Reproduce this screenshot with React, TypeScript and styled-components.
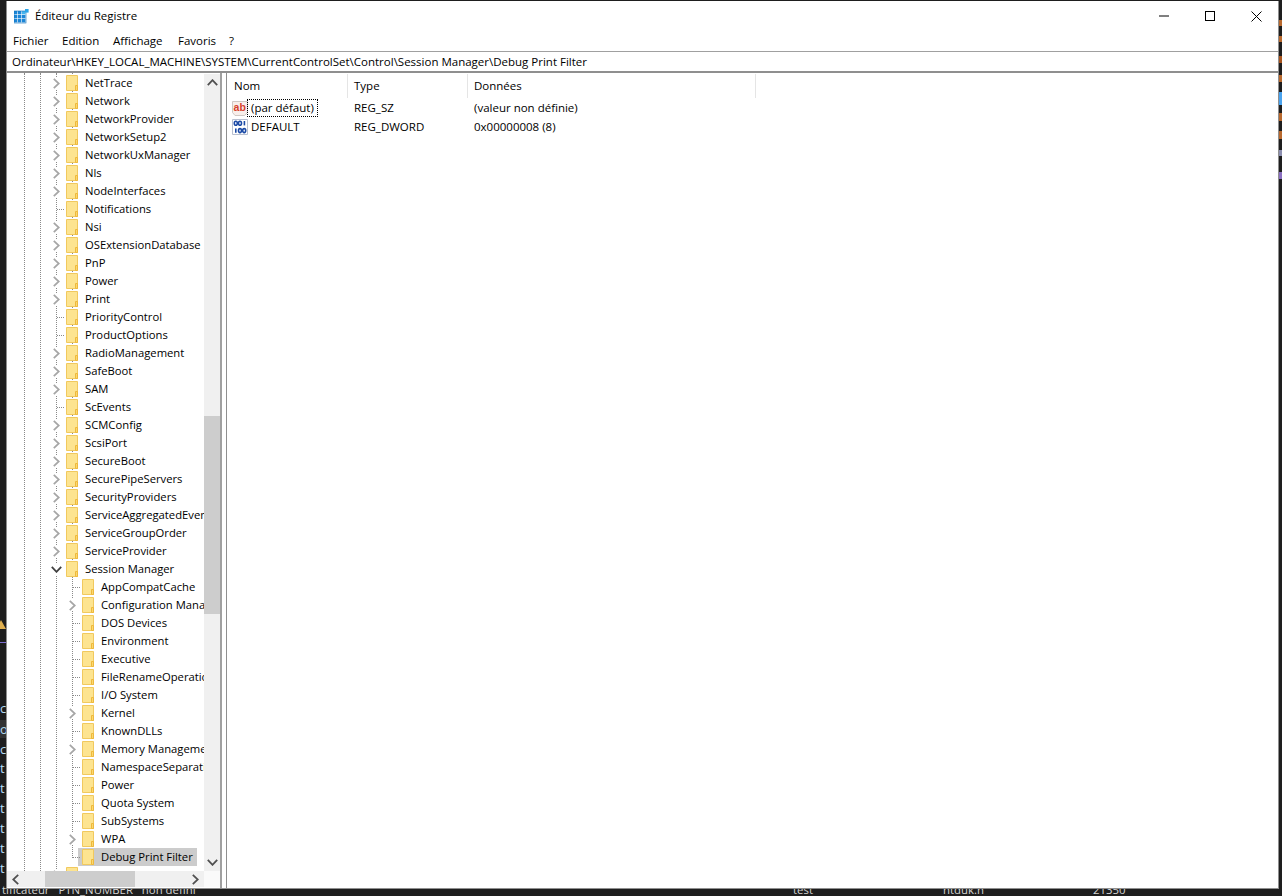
import React from 'react'
import styled, { createGlobalStyle } from 'styled-components'

const UI_FONT = '"Open Sans", "Noto Sans", sans-serif'

const GlobalStyle = createGlobalStyle`
  html, body {
    margin: 0;
    padding: 0;
    background: #1e1e1e;
  }
`

type TreeItem = { name: string; level: 1 | 2; kind: 'closed' | 'open' | 'leaf'; selected?: boolean }

const closed = (name: string, level: 1 | 2 = 1): TreeItem => ({ name, level, kind: 'closed' })
const leaf = (name: string, level: 1 | 2 = 1): TreeItem => ({ name, level, kind: 'leaf' })

const treeItems: TreeItem[] = [
  closed('NetTrace'),
  closed('Network'),
  closed('NetworkProvider'),
  closed('NetworkSetup2'),
  closed('NetworkUxManager'),
  closed('Nls'),
  closed('NodeInterfaces'),
  leaf('Notifications'),
  closed('Nsi'),
  closed('OSExtensionDatabase'),
  closed('PnP'),
  closed('Power'),
  closed('Print'),
  leaf('PriorityControl'),
  leaf('ProductOptions'),
  closed('RadioManagement'),
  closed('SafeBoot'),
  closed('SAM'),
  leaf('ScEvents'),
  closed('SCMConfig'),
  closed('ScsiPort'),
  closed('SecureBoot'),
  closed('SecurePipeServers'),
  closed('SecurityProviders'),
  closed('ServiceAggregatedEvents'),
  closed('ServiceGroupOrder'),
  closed('ServiceProvider'),
  { name: 'Session Manager', level: 1, kind: 'open' },
  leaf('AppCompatCache', 2),
  closed('Configuration Manager', 2),
  leaf('DOS Devices', 2),
  leaf('Environment', 2),
  leaf('Executive', 2),
  leaf('FileRenameOperations', 2),
  leaf('I/O System', 2),
  closed('Kernel', 2),
  leaf('KnownDLLs', 2),
  closed('Memory Management', 2),
  leaf('NamespaceSeparation', 2),
  leaf('Power', 2),
  leaf('Quota System', 2),
  leaf('SubSystems', 2),
  closed('WPA', 2),
  { name: 'Debug Print Filter', level: 2, kind: 'leaf', selected: true },
  closed('SNMP'),
]

const leftLetters = [
  { y: 699, text: 'c', hi: false },
  { y: 720, text: 'o', hi: true },
  { y: 740, text: 'c', hi: false },
  { y: 759, text: 't', hi: false },
  { y: 779, text: 't', hi: false },
  { y: 799, text: 't', hi: false },
  { y: 819, text: 't', hi: false },
  { y: 839, text: 't', hi: false },
  { y: 859, text: 't', hi: false },
]

const rightTicks = [
  { y: 20, h: 6, color: '#b8692e' },
  { y: 36, h: 6, color: '#b8692e' },
  { y: 56, h: 7, color: '#a8551f' },
  { y: 75, h: 7, color: '#b8692e' },
  { y: 92, h: 13, color: '#4aa3ee' },
  { y: 113, h: 8, color: '#b8692e' },
  { y: 131, h: 8, color: '#b8692e' },
  { y: 150, h: 6, color: '#8c8fb0' },
  { y: 172, h: 7, color: '#8a6fc0' },
]

const Page = styled.div`
  position: relative;
  width: 1282px;
  height: 896px;
  box-sizing: border-box;
  padding: 1px 3px 7px 6px;
  overflow: hidden;
  background: #1e1e1e;
  font-family: ${UI_FONT};
  font-size: 11.5px;
  color: #000;
`

const BehindLetter = styled.span<{ $y: number; $hi: boolean }>`
  position: absolute;
  left: 0;
  top: ${({ $y }) => $y}px;
  width: 6px;
  height: 18px;
  line-height: 18px;
  box-sizing: border-box;
  overflow: hidden;
  font-size: 13px;
  color: #b5dcf5;
  background: ${({ $hi }) => ($hi ? '#333' : 'transparent')};
`

const BehindText = styled.span<{ $x: number }>`
  position: absolute;
  left: ${({ $x }) => $x}px;
  top: 882px;
  line-height: 16px;
  font-size: 11.4px;
  white-space: pre;
  color: #d4d4d4;
`

const WarningMark = styled.span`
  position: absolute;
  left: -4px;
  top: 620px;
  border-left: 5px solid transparent;
  border-right: 5px solid transparent;
  border-bottom: 9px solid #e0b050;
`

const PurpleRule = styled.span`
  position: absolute;
  left: 0;
  top: 642px;
  width: 6px;
  height: 1px;
  background: #7d6fd0;
`

const RightTick = styled.span<{ $y: number; $h: number; $color: string }>`
  position: absolute;
  left: 1279px;
  top: ${({ $y }) => $y}px;
  width: 3px;
  height: ${({ $h }) => $h}px;
  background: ${({ $color }) => $color};
`

const Window = styled.div`
  position: relative;
  display: flex;
  flex-direction: column;
  height: 100%;
  box-sizing: border-box;
  background: #fff;
  border-left: 1px solid #8f8f8f;
  border-right: 1px solid #8f8f8f;
  border-bottom: 1px solid #8f8f8f;
`

const TitleBar = styled.div`
  display: flex;
  align-items: center;
  flex: none;
  height: 30px;
  padding-left: 7px;
`

const TitleText = styled.span`
  margin: 0 0 2px 6px;
`

const WindowButtons = styled.div`
  display: flex;
  margin-left: auto;
  margin-right: -1px;
`

const WindowButton = styled.div`
  display: flex;
  align-items: center;
  justify-content: center;
  width: 46px;
  height: 30px;
`

const MenuBar = styled.div`
  display: flex;
  align-items: center;
  flex: none;
  box-sizing: border-box;
  height: 20px;
  padding: 0 0 2px 6px;
`

const MenuItem = styled.span<{ $width: number }>`
  width: ${({ $width }) => $width}px;
`

const AddressBar = styled.div`
  flex: none;
  height: 19px;
  line-height: 19px;
  padding-left: 5px;
  border-top: 1px solid #a0a0a0;
  border-bottom: 2px solid #8f8f8f;
  white-space: nowrap;
`

const Body = styled.div`
  display: flex;
  flex: 1;
  min-height: 0;
`

const TreePane = styled.div`
  display: grid;
  flex: none;
  width: 213px;
  padding-bottom: 1px;
  grid-template-columns: 197px 16px;
  grid-template-rows: 1fr 16px;
`

const TreeViewport = styled.div`
  position: relative;
  overflow: hidden;
  padding-top: 1px;
`

const TreeGuide = styled.span<{ $x: number; $bottom: number }>`
  position: absolute;
  left: ${({ $x }) => $x}px;
  top: 0;
  bottom: ${({ $bottom }) => $bottom}px;
  border-left: 1px dotted #8a8a8a;
`

const TreeRow = styled.div<{ $level: number; $leaf: boolean }>`
  position: relative;
  display: flex;
  align-items: center;
  height: 18px;
  padding-left: ${({ $level }) => 43 + ($level - 1) * 16}px;
  white-space: nowrap;

  ${({ $leaf, $level }) =>
    $leaf
      ? `&::before {
    content: '';
    position: absolute;
    left: ${50 + ($level - 1) * 16}px;
    top: 9px;
    width: 7px;
    border-top: 1px dotted #8a8a8a;
  }`
      : ''}
`

const ExpanderSlot = styled.span`
  position: relative;
  display: flex;
  align-items: center;
  justify-content: center;
  flex: none;
  width: 12px;
  height: 12px;
  background: #fff;
`

const LeafSlot = styled.span`
  flex: none;
  width: 12px;
`

const TreeLabel = styled.span<{ $selected?: boolean }>`
  display: flex;
  align-items: center;
  height: 18px;
  padding: 0 4px;
  background: ${({ $selected }) => ($selected ? '#cccccc' : 'transparent')};
`

const TreeText = styled.span`
  margin-left: 7px;
  margin-bottom: 1px;
  font-size: 11.25px;
`

const VScroll = styled.div`
  display: grid;
  grid-template-rows: 17px 325px 198px 1fr 17px;
  margin-top: 1px;
  background: #f0f0f0;
`

const HScroll = styled.div`
  display: grid;
  grid-template-columns: 17px 21px 90px 1fr 17px;
  background: #f0f0f0;
`

const ScrollArrow = styled.div<{ $column?: number; $row?: number }>`
  display: flex;
  align-items: center;
  justify-content: center;
  ${({ $column }) => ($column ? `grid-column: ${$column};` : '')}
  ${({ $row }) => ($row ? `grid-row: ${$row};` : '')}
`

const ScrollThumb = styled.div<{ $column?: number; $row?: number }>`
  background: #cdcdcd;
  ${({ $column }) => ($column ? `grid-column: ${$column};` : '')}
  ${({ $row }) => ($row ? `grid-row: ${$row};` : '')}
`

const ScrollCorner = styled.div`
  background: #fafafa;
`

const Splitter = styled.div`
  flex: none;
  width: 4px;
  border-left: 2px solid #a0a0a0;
  border-right: 1px solid #8f8f8f;
`

const ListPane = styled.div`
  flex: 1;
  min-width: 0;
`

const ListGrid = styled.div`
  display: grid;
  grid-template-columns: 121px 120px 288px;
  width: 529px;
`

const HeaderCell = styled.div<{ $pad: number }>`
  height: 24px;
  margin-top: 1px;
  line-height: 24px;
  padding-left: ${({ $pad }) => $pad}px;
  border-right: 1px solid #e5e5e5;
  box-sizing: border-box;
`

const ListCell = styled.div`
  display: flex;
  align-items: center;
  height: 19px;
  padding-left: 6px;
  white-space: nowrap;
`

const NameCell = styled(ListCell)`
  padding-left: 5px;
`

const NameText = styled.span<{ $focused?: boolean }>`
  padding: 0 3px;
  line-height: 16px;
  outline: ${({ $focused }) => ($focused ? '1px dotted #000' : 'none')};
  outline-offset: 0;
`

function FolderIcon() {
  return (
    <svg width="12" height="16" viewBox="0 0 12 16">
      <path d="M0.5 0.5H11.5V15.5H0.5Z" fill="#fde490" stroke="#f1c95e" />
      <path d="M9.5 15.5V10.5H11.5V15.5Z" fill="#fbd870" stroke="#eeb93c" />
    </svg>
  )
}

function RightChevron({ color = '#a6a6a6' }: { color?: string }) {
  return (
    <svg width="7" height="11" viewBox="0 0 7 11">
      <path d="M0.8 0.8L5.8 5.5L0.8 10.2" fill="none" stroke={color} strokeWidth="1.8" />
    </svg>
  )
}

function LeftChevron() {
  return (
    <svg width="7" height="11" viewBox="0 0 7 11">
      <path d="M6.2 0.8L1.2 5.5L6.2 10.2" fill="none" stroke="#505050" strokeWidth="1.8" />
    </svg>
  )
}

function DownChevron({ color = '#404040' }: { color?: string }) {
  return (
    <svg width="11" height="7" viewBox="0 0 11 7">
      <path d="M0.8 0.8L5.5 5.8L10.2 0.8" fill="none" stroke={color} strokeWidth="1.8" />
    </svg>
  )
}

function UpChevron() {
  return (
    <svg width="11" height="7" viewBox="0 0 11 7">
      <path d="M0.8 6.2L5.5 1.2L10.2 6.2" fill="none" stroke="#505050" strokeWidth="1.8" />
    </svg>
  )
}

function RegeditIcon() {
  const cells = [0, 1, 2].flatMap((r) => [0, 1, 2].map((c) => ({ r, c })))
  return (
    <svg width="15" height="15" viewBox="0 0 15 15">
      {cells.map(({ r, c }) => (
        <rect key={`${r}-${c}`} x={c * 4} y={2 + r * 4} width="3.4" height="3.4" fill={r === 0 && c === 2 ? '#45b4ee' : '#1c86d6'} />
      ))}
      <rect x="0" y="2" width="12" height="12" fill="none" stroke="#0f6fb8" strokeWidth="0.6" />
      <rect x="11" y="0" width="3.6" height="3.6" fill="#2aa4e8" />
    </svg>
  )
}

function StringValueIcon() {
  return (
    <svg width="16" height="16" viewBox="0 0 16 16">
      <path d="M0.5 1.5H15.5V12.5L12.5 15.5H3L0.5 12.5Z" fill="#f8eeea" stroke="#cfc8c4" />
      <text x="1.6" y="10.5" fontFamily="Liberation Sans, sans-serif" fontSize="10.5" fontWeight="700" fill="#d6402a">
        ab
      </text>
    </svg>
  )
}

function BinaryValueIcon() {
  return (
    <svg width="16" height="16" viewBox="0 0 16 16">
      <path d="M0.5 0.5H15.5V15.5H0.5Z" fill="#fff" stroke="#b9c0d0" />
      <g fill="none" stroke="#1b4aa6" strokeWidth="1.6">
        <ellipse cx="3.8" cy="4.2" rx="1.5" ry="2" />
        <ellipse cx="8" cy="4.2" rx="1.5" ry="2" />
        <path d="M12.4 2V6.4" />
        <path d="M3.8 9.4V13.8" />
        <ellipse cx="8" cy="11.6" rx="1.5" ry="2" />
        <ellipse cx="12.2" cy="11.6" rx="1.5" ry="2" />
      </g>
    </svg>
  )
}

export default function App() {
  return (
    <Page>
      <GlobalStyle />
      <WarningMark />
      <PurpleRule />
      {leftLetters.map((l) => (
        <BehindLetter key={l.y} $y={l.y} $hi={l.hi}>
          {l.text}
        </BehindLetter>
      ))}
      {rightTicks.map((t) => (
        <RightTick key={t.y} $y={t.y} $h={t.h} $color={t.color} />
      ))}
      <BehindText $x={2}>{'tificateur   PTN_NUMBER   non défini'}</BehindText>
      <BehindText $x={793}>test</BehindText>
      <BehindText $x={943}>ntduk.n</BehindText>
      <BehindText $x={1093}>21350</BehindText>

      <Window>
        <TitleBar>
          <RegeditIcon />
          <TitleText>Éditeur du Registre</TitleText>
          <WindowButtons>
            <WindowButton>
              <svg width="10" height="10" viewBox="0 0 10 10">
                <path d="M0 5H10" stroke="#000" strokeWidth="1" />
              </svg>
            </WindowButton>
            <WindowButton>
              <svg width="10" height="10" viewBox="0 0 10 10">
                <rect x="0.5" y="0.5" width="9" height="9" fill="none" stroke="#000" strokeWidth="1" />
              </svg>
            </WindowButton>
            <WindowButton>
              <svg width="11" height="11" viewBox="0 0 11 11">
                <path d="M0.5 0.5L10.5 10.5M10.5 0.5L0.5 10.5" stroke="#000" strokeWidth="1" />
              </svg>
            </WindowButton>
          </WindowButtons>
        </TitleBar>
        <MenuBar>
          <MenuItem $width={49}>Fichier</MenuItem>
          <MenuItem $width={51}>Edition</MenuItem>
          <MenuItem $width={65}>Affichage</MenuItem>
          <MenuItem $width={51}>Favoris</MenuItem>
          <MenuItem $width={12}>?</MenuItem>
        </MenuBar>
        <AddressBar>Ordinateur\HKEY_LOCAL_MACHINE\SYSTEM\CurrentControlSet\Control\Session Manager\Debug Print Filter</AddressBar>
        <Body>
          <TreePane>
            <TreeViewport>
              <TreeGuide $x={17} $bottom={0} />
              <TreeGuide $x={33} $bottom={0} />
              <TreeGuide $x={49} $bottom={0} />
              <TreeGuide $x={65} $bottom={13} />
              {treeItems.map((item) => (
                <TreeRow key={`${item.level}-${item.name}`} $level={item.level} $leaf={item.kind === 'leaf'}>
                  {item.kind === 'leaf' ? (
                    <LeafSlot />
                  ) : (
                    <ExpanderSlot>{item.kind === 'open' ? <DownChevron /> : <RightChevron />}</ExpanderSlot>
                  )}
                  <TreeLabel $selected={item.selected}>
                    <FolderIcon />
                    <TreeText>{item.name}</TreeText>
                  </TreeLabel>
                </TreeRow>
              ))}
            </TreeViewport>
            <VScroll>
              <ScrollArrow>
                <UpChevron />
              </ScrollArrow>
              <ScrollThumb $row={3} />
              <ScrollArrow $row={5}>
                <DownChevron color="#505050" />
              </ScrollArrow>
            </VScroll>
            <HScroll>
              <ScrollArrow>
                <LeftChevron />
              </ScrollArrow>
              <ScrollThumb $column={3} />
              <ScrollArrow $column={5}>
                <RightChevron color="#505050" />
              </ScrollArrow>
            </HScroll>
            <ScrollCorner />
          </TreePane>
          <Splitter />
          <ListPane>
            <ListGrid>
              <HeaderCell $pad={7}>Nom</HeaderCell>
              <HeaderCell $pad={6}>Type</HeaderCell>
              <HeaderCell $pad={6}>Données</HeaderCell>
              <NameCell>
                <StringValueIcon />
                <NameText $focused>(par défaut)</NameText>
              </NameCell>
              <ListCell>REG_SZ</ListCell>
              <ListCell>(valeur non définie)</ListCell>
              <NameCell>
                <BinaryValueIcon />
                <NameText>DEFAULT</NameText>
              </NameCell>
              <ListCell>REG_DWORD</ListCell>
              <ListCell>0x00000008 (8)</ListCell>
            </ListGrid>
          </ListPane>
        </Body>
      </Window>
    </Page>
  )
}
